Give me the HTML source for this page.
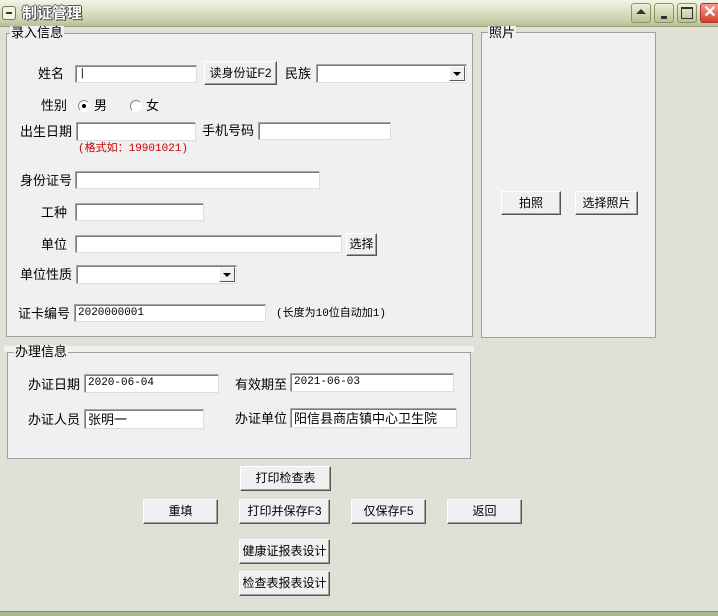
<!DOCTYPE html>
<html><head><meta charset="utf-8"><style>
*{box-sizing:border-box;margin:0;padding:0}
body{width:718px;height:616px;background:#e1e0d7;position:relative;overflow:hidden;font-family:"Liberation Sans","Noto Sans CJK SC","WenQuanYi Zen Hei",sans-serif;font-size:13px;color:#000;line-height:14px}
.a{position:absolute;white-space:nowrap}
.title{left:0;top:0;width:718px;height:27px;background:linear-gradient(#f3f4e6,#dfe2c8 40%,#c9cea9 80%,#b8be96);border-bottom:1px solid #9aa27a}
.title .t{left:22px;top:6px;font-size:15px;line-height:16px;font-weight:bold;color:#fff;text-shadow:1px 1px 0 #444,-1px 0 0 #555,0 -1px 0 #555,1px 0 0 #555}
.tb{top:3px;width:20px;height:20px;border:1px solid #8a9468;border-radius:3px;background:linear-gradient(#eef0d8,#b9c192)}
.grp{background:#f0f0f0;border:1px solid #a0a0a0}
.lg{background:#f0f0f0;padding:0 1px;font-size:13px;line-height:14px}
.in{background:#fff;border:1px solid #a5a5a5;border-right-color:#ddd;border-bottom-color:#ddd;box-shadow:inset 1px 1px 0 #7a7a7a;font-size:11px;padding:2px 0 0 3px;line-height:13px;font-family:"Liberation Mono","Noto Sans CJK SC",monospace}
.btn{background:#f0f0f0;border:1px solid;border-color:#fff #555 #555 #fff;box-shadow:inset -1px -1px 0 #a0a0a0;text-align:center;font-size:12px;letter-spacing:0}
.lb{font-size:13px;line-height:14px}
</style></head><body>
<div class="a title">
 <div class="a" style="left:2px;top:6px;width:14px;height:14px;border:1px solid #6f7a50;border-radius:3px;background:#f2f3e2"><div class="a" style="left:3px;top:5px;width:6px;height:2px;background:#333"></div></div>
 <div class="a t">制证管理</div>
 <div class="a tb" style="left:631px"><div class="a" style="left:4px;top:5px;width:0;height:0;border-left:5px solid transparent;border-right:5px solid transparent;border-bottom:5px solid #333"></div></div>
 <div class="a tb" style="left:654px"><div class="a" style="left:6px;top:12px;width:6px;height:3px;background:#333"></div></div>
 <div class="a tb" style="left:677px"><div class="a" style="left:3px;top:3px;width:12px;height:12px;border:1px solid #333;border-top-width:2px"></div></div>
 <div class="a" style="left:700px;top:3px;width:20px;height:20px;border:1px solid #a33;border-radius:3px;background:linear-gradient(#f49a8a,#d8402e);color:#fff;font-size:16px;line-height:17px;text-align:center;font-weight:bold">✕</div>
</div>

<div class="a grp" style="left:6px;top:33px;width:467px;height:304px"></div>
<div class="a lg" style="left:10px;top:26px">录入信息</div>
<div class="a grp" style="left:481px;top:32px;width:175px;height:306px"></div>
<div class="a lg" style="left:488px;top:26px">照片</div>
<div class="a grp" style="left:7px;top:352px;width:464px;height:107px"></div>
<div class="a" style="left:4px;top:346px;width:470px;height:6px;background:#f0f0f0"></div>
<div class="a lg" style="left:14px;top:345px">办理信息</div>

<div class="a lb" style="left:38px;top:67px">姓名</div>
<div class="a in" style="left:75px;top:65px;width:122px;height:18px">|</div>
<div class="a btn" style="left:204px;top:61px;width:73px;height:24px;line-height:22px">读身份证F2</div>
<div class="a lb" style="left:285px;top:67px">民族</div>
<div class="a in" style="left:316px;top:64px;width:151px;height:19px"></div>
<div class="a" style="left:449px;top:66px;width:16px;height:15px;background:#f0f0f0;border:1px solid;border-color:#fff #555 #555 #fff"><div class="a" style="left:3px;top:5px;border-left:4px solid transparent;border-right:4px solid transparent;border-top:4px solid #000"></div></div>

<div class="a lb" style="left:41px;top:99px">性别</div>
<div class="a" style="left:78px;top:100px;width:12px;height:12px;border-radius:50%;border:1px solid;border-color:#888 #fff #fff #888;background:#fff"><div class="a" style="left:3px;top:3px;width:4px;height:4px;border-radius:50%;background:#000"></div></div>
<div class="a lb" style="left:94px;top:99px">男</div>
<div class="a" style="left:130px;top:100px;width:12px;height:12px;border-radius:50%;border:1px solid;border-color:#888 #fff #fff #888;background:#fff"></div>
<div class="a lb" style="left:146px;top:99px">女</div>

<div class="a lb" style="left:20px;top:125px">出生日期</div>
<div class="a in" style="left:76px;top:122px;width:120px;height:19px"></div>
<div class="a lb" style="left:202px;top:124px">手机号码</div>
<div class="a in" style="left:258px;top:122px;width:133px;height:18px"></div>
<div class="a" style="left:78px;top:142px;font-size:11px;color:#c00;font-family:'Liberation Mono','Noto Sans CJK SC',monospace">(格式如：19901021)</div>

<div class="a lb" style="left:20px;top:174px">身份证号</div>
<div class="a in" style="left:75px;top:171px;width:245px;height:18px"></div>
<div class="a lb" style="left:41px;top:206px">工种</div>
<div class="a in" style="left:75px;top:203px;width:129px;height:18px"></div>
<div class="a lb" style="left:41px;top:238px">单位</div>
<div class="a in" style="left:75px;top:235px;width:267px;height:18px"></div>
<div class="a btn" style="left:346px;top:233px;width:31px;height:23px;line-height:21px">选择</div>
<div class="a lb" style="left:20px;top:268px">单位性质</div>
<div class="a in" style="left:76px;top:265px;width:161px;height:19px"></div>
<div class="a" style="left:219px;top:267px;width:16px;height:15px;background:#f0f0f0;border:1px solid;border-color:#fff #555 #555 #fff"><div class="a" style="left:3px;top:5px;border-left:4px solid transparent;border-right:4px solid transparent;border-top:4px solid #000"></div></div>
<div class="a lb" style="left:18px;top:307px">证卡编号</div>
<div class="a in" style="left:74px;top:304px;width:192px;height:18px">2020000001</div>
<div class="a" style="left:276px;top:307px;font-size:11px;font-family:'Liberation Mono','Noto Sans CJK SC',monospace">(长度为10位自动加1)</div>

<div class="a btn" style="left:501px;top:191px;width:60px;height:24px;line-height:22px">拍照</div>
<div class="a btn" style="left:575px;top:191px;width:63px;height:24px;line-height:22px">选择照片</div>

<div class="a lb" style="left:28px;top:378px">办证日期</div>
<div class="a in" style="left:84px;top:374px;width:135px;height:19px">2020-06-04</div>
<div class="a lb" style="left:235px;top:378px">有效期至</div>
<div class="a in" style="left:290px;top:373px;width:164px;height:19px">2021-06-03</div>
<div class="a lb" style="left:28px;top:413px">办证人员</div>
<div class="a in" style="left:84px;top:409px;width:120px;height:20px;font-family:'Liberation Sans','Noto Sans CJK SC',sans-serif;font-size:13px;line-height:15px">张明一</div>
<div class="a lb" style="left:235px;top:412px">办证单位</div>
<div class="a in" style="left:290px;top:408px;width:167px;height:20px;font-family:'Liberation Sans','Noto Sans CJK SC',sans-serif;font-size:13px;line-height:15px">阳信县商店镇中心卫生院</div>

<div class="a btn" style="left:240px;top:466px;width:91px;height:25px;line-height:23px">打印检查表</div>
<div class="a btn" style="left:143px;top:499px;width:75px;height:25px;line-height:23px">重填</div>
<div class="a btn" style="left:239px;top:499px;width:91px;height:25px;line-height:23px">打印并保存F3</div>
<div class="a btn" style="left:351px;top:499px;width:75px;height:25px;line-height:23px">仅保存F5</div>
<div class="a btn" style="left:447px;top:499px;width:75px;height:25px;line-height:23px">返回</div>
<div class="a btn" style="left:239px;top:539px;width:91px;height:25px;line-height:23px">健康证报表设计</div>
<div class="a btn" style="left:239px;top:571px;width:91px;height:25px;line-height:23px">检查表报表设计</div>

<div class="a" style="left:0;top:611px;width:718px;height:5px;background:#a9b58a;border-top:1px solid #7f8c5e"></div>
</body></html>
